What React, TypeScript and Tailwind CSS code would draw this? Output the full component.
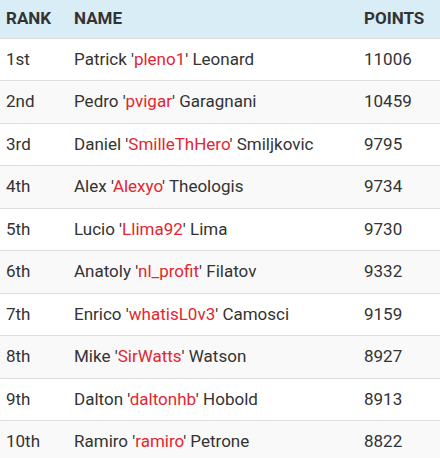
const rows = [
  ["1st", "Patrick", "pleno1", "Leonard", "11006"],
  ["2nd", "Pedro", "pvigar", "Garagnani", "10459"],
  ["3rd", "Daniel", "SmilleThHero", "Smiljkovic", "9795"],
  ["4th", "Alex", "Alexyo", "Theologis", "9734"],
  ["5th", "Lucio", "Llima92", "Lima", "9730"],
  ["6th", "Anatoly", "nl_profit", "Filatov", "9332"],
  ["7th", "Enrico", "whatisL0v3", "Camosci", "9159"],
  ["8th", "Mike", "SirWatts", "Watson", "8927"],
  ["9th", "Dalton", "daltonhb", "Hobold", "8913"],
  ["10th", "Ramiro", "ramiro", "Petrone", "8822"],
]

export default function App() {
  return (
    <div className="w-[440px] h-[458px] overflow-hidden bg-white text-[#333] font-['Roboto',sans-serif]">
      <table className="w-full border-collapse">
        <thead>
          <tr className="h-[38px] bg-[#d9edf7] border-b border-[#ddd] text-left text-[17px] font-bold">
            <th className="w-[68px] pl-[6px]">RANK</th>
            <th className="pl-[6px]">NAME</th>
            <th className="w-[82px] pl-[6px]">POINTS</th>
          </tr>
        </thead>
        <tbody className="text-[17px]">
          {rows.map(([rank, first, nick, last, pts], i) => (
            <tr
              key={rank}
              className={`h-[42.5px] border-b border-[#ddd] ${i % 2 ? "bg-[#f9f9f9]" : "bg-white"}`}
            >
              <td className="pl-[6px]">{rank}</td>
              <td className="pl-[6px]">
                {first} '<span className="text-[#e3262f]">{nick}</span>' {last}
              </td>
              <td className="pl-[6px]">{pts}</td>
            </tr>
          ))}
        </tbody>
      </table>
    </div>
  )
}
